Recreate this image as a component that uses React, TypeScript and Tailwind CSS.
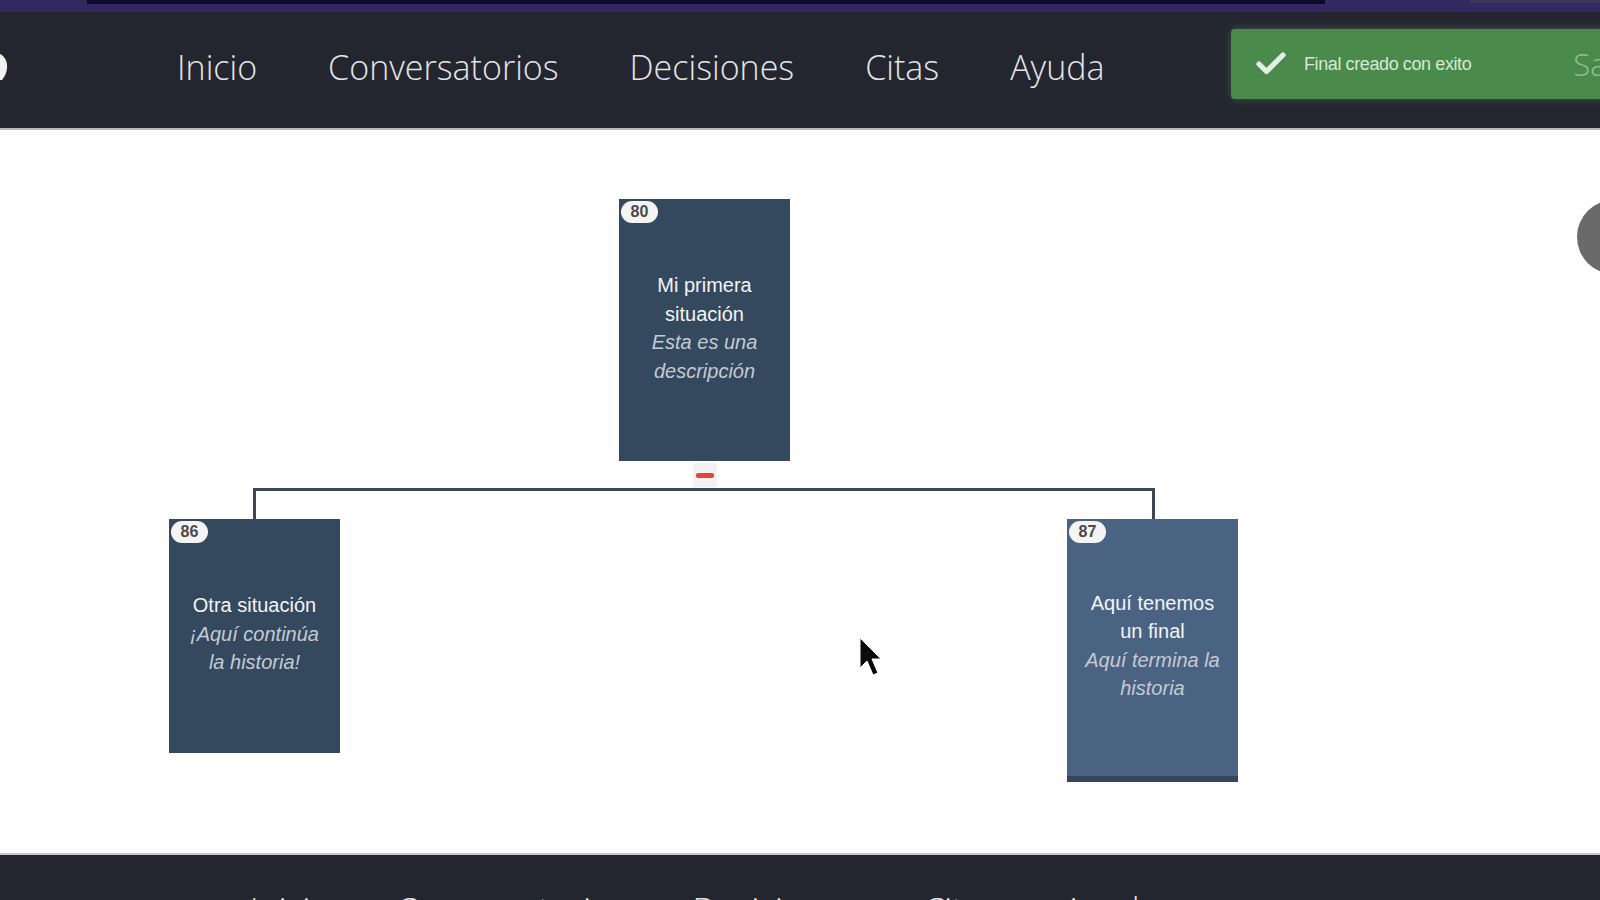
import React from "react";
import { Check } from "lucide-react";

const navItems = ["Inicio", "Conversatorios", "Decisiones", "Citas", "Ayuda"];

function Nav({ size }: { size: string }) {
  return (
    <ul
      className={`flex items-center font-['Open_Sans',sans-serif] font-light text-[#e4e4e6] leading-none ${size}`}
    >
      {navItems.map((n) => (
        <li key={n}>{n}</li>
      ))}
    </ul>
  );
}

type CardProps = {
  id: string;
  title: string;
  desc: string;
  className: string;
};

function Card({ id, title, desc, className }: CardProps) {
  return (
    <div
      className={`absolute w-[171px] flex items-center justify-center px-[14px] text-center font-['Liberation_Sans',Arial,sans-serif] text-[20px] leading-[28.5px] ${className}`}
    >
      <div className="absolute left-[2px] top-[2px] w-[37px] h-[22px] rounded-full bg-[#f4f4f4] flex items-center justify-center text-[16px] font-bold text-[#4a4a4a] leading-none">
        {id}
      </div>
      <div className="-mt-[4px]">
        <div className="text-[#f2f4f7]">{title}</div>
        <div className="italic text-[#c3cad4]">{desc}</div>
      </div>
    </div>
  );
}

export default function App() {
  return (
    <div className="relative w-[1600px] h-[900px] overflow-hidden bg-white flex flex-col">
      {/* top strip */}
      <div className="h-[12px] shrink-0 bg-[#33285f] flex items-start pl-[87px]">
        <div className="w-[1238px] h-[4px] bg-[#0e0a2a]" />
        <div className="ml-auto w-[130px] h-[3px] bg-[#3d3858]" />
      </div>

      {/* header */}
      <header className="h-[118px] shrink-0 bg-[#23262f] border-b-2 border-[#b9b9bc] flex items-center pb-[6px]">
        <svg width="10" height="30" viewBox="0 0 10 30" className="shrink-0">
          <path d="M0 2 C 8 6, 10 18, 2 28 L 0 28 Z" fill="#f2f2f2" />
        </svg>
        <div className="ml-[167px]">
          <Nav size="text-[34px] gap-[71px]" />
        </div>
      </header>

      {/* canvas */}
      <main className="relative h-[723px] shrink-0 bg-[#fefefe]">
        {/* connectors */}
        <div className="absolute left-[253px] top-[358px] w-[902px] h-[3px] bg-[#3b4656]" />
        <div className="absolute left-[253px] top-[358px] w-[3px] h-[31px] bg-[#3b4656]" />
        <div className="absolute left-[1152px] top-[358px] w-[3px] h-[31px] bg-[#3b4656]" />

        {/* collapse toggle */}
        <div className="absolute left-[693px] top-[333px] w-[24px] h-[24px] bg-[#f2f2f2] flex items-center justify-center">
          <div className="w-[18px] h-[5px] rounded-[2px] bg-[#e5453b]" />
        </div>

        <Card
          id="80"
          title="Mi primera situación"
          desc="Esta es una descripción"
          className="left-[619px] top-[69px] h-[262px] bg-[#34495e]"
        />
        <Card
          id="86"
          title="Otra situación"
          desc="¡Aquí continúa la historia!"
          className="left-[169px] top-[389px] h-[234px] bg-[#34495e]"
        />
        <Card
          id="87"
          title="Aquí tenemos un final"
          desc="Aquí termina la historia"
          className="left-[1067px] top-[389px] h-[263px] bg-[#4b6383] border-b-[6px] border-[#33465d]"
        />
      </main>

      {/* footer */}
      <footer className="h-[116px] shrink-0 bg-[#23262f] border-t-2 border-[#c8c8ca] flex items-center pl-[250px] pb-[4px]">
        <Nav size="text-[34px] gap-[66px]" />
      </footer>

      {/* toast */}
      <div className="absolute left-[1231px] top-[29px] w-[400px] h-[70px] rounded-[4px] bg-[#4a8b4b] shadow-[0_0_10px_rgba(120,170,120,0.35)] flex items-center pl-[22px]">
        <Check size={36} strokeWidth={3.5} className="text-[#e2f0e2]" />
        <span className="ml-[15px] font-['Liberation_Sans',Arial,sans-serif] text-[18px] text-[#d6e9d6] tracking-[-0.4px]">
          Final creado con exito
        </span>
        <span className="ml-[102px] font-['Open_Sans',sans-serif] font-light text-[31px] text-[#8fbf8f]">
          Sa
        </span>
      </div>

      {/* grey round button at right edge */}
      <div className="absolute left-[1577px] top-[200px] w-[74px] h-[74px] rounded-full bg-[#6a6a6a]" />

      {/* mouse cursor */}
      <svg
        className="absolute left-[859px] top-[637px]"
        width="26"
        height="42"
        viewBox="0 0 26 42"
      >
        <path
          d="M1 1 L1 31 L8 24 L14 38 L19 36 L13 22 L22 22 Z"
          fill="#0a0a0a"
          stroke="#ffffff"
          strokeWidth="1"
        />
      </svg>
    </div>
  );
}
